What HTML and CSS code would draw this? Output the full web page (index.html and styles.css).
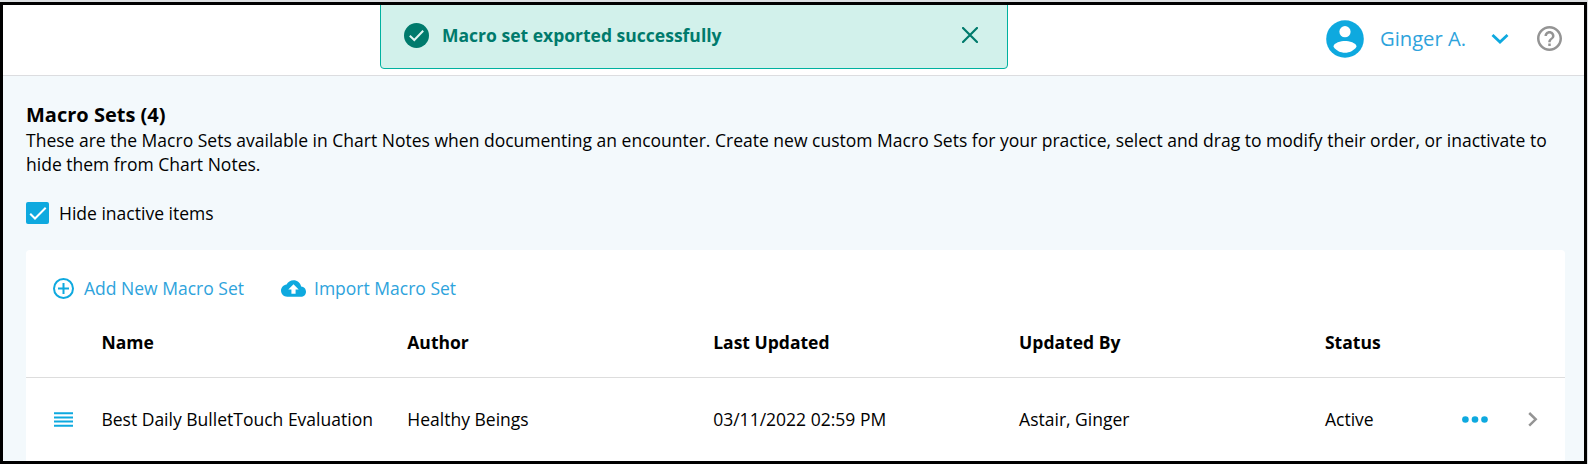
FILE: index.html
```
<!DOCTYPE html>
<html lang="en">
<head>
<meta charset="utf-8">
<title>Macro Sets</title>
<link rel="stylesheet" href="styles.css">
</head>
<body>
<div class="page">
  <header class="topbar">
    <svg class="avatar" viewBox="0 0 38 38"><circle cx="19" cy="19" r="18.8" fill="#0ea9df"/><circle cx="19" cy="11.7" r="5.6" fill="#fff"/><path d="M7.500 26.700C7.500 22.700 15.200 21 19 21s11.500 1.700 11.500 5.700C28 30.600 23.500 32.700 19 32.700S10 30.600 7.500 26.700z" fill="#fff"/></svg>
    <span class="user">Ginger A.</span>
    <svg class="caret" viewBox="0 0 18 12"><path d="M1.500 2 9 9 16.500 2" fill="none" stroke="#0ea9df" stroke-width="2.800"/></svg>
    <svg class="help" viewBox="2 2 20 20"><path fill="#949494" d="M11 18h2v-2h-2v2zm1-16C6.480 2 2 6.480 2 12s4.480 10 10 10 10-4.480 10-10S17.520 2 12 2zm0 18c-4.410 0-8-3.590-8-8s3.590-8 8-8 8 3.590 8 8-3.590 8-8 8zm0-14c-2.210 0-4 1.790-4 4h2c0-1.100.9-2 2-2s2 .9 2 2c0 2-3 1.750-3 5h2c0-2.250 3-2.500 3-5 0-2.210-1.790-4-4-4z"/></svg>
  </header>
  <main class="content">
    <h1 class="title">Macro Sets (4)</h1>
    <p class="intro">These are the Macro Sets available in Chart Notes when documenting an encounter. Create new custom Macro Sets for your practice, select and drag to modify their order, or inactivate to<br>hide them from Chart Notes.</p>
    <div class="filter">
      <svg class="checkbox" viewBox="0 0 23 22"><rect width="23" height="22" rx="2" fill="#0ea9df"/><path d="M4.200 11.800 9 16.500 19.700 5.800" fill="none" stroke="#fff" stroke-width="2"/></svg>
      <span class="filter-label">Hide inactive items</span>
    </div>
    <section class="card">
      <div class="actions">
        <svg class="add-icon" viewBox="0 0 21 21"><g fill="none" stroke="#0ea9df" stroke-width="2"><circle cx="10.500" cy="10.500" r="9.500"/><path d="M10.500 5v11M5 10.500h11"/></g></svg>
        <span class="link add">Add New Macro Set</span>
        <svg class="cloud" viewBox="0 4 24 16"><path fill="#0ea9df" d="M19.350 10.040C18.670 6.590 15.640 4 12 4 9.110 4 6.600 5.640 5.350 8.040 2.340 8.360 0 10.910 0 14c0 3.310 2.690 6 6 6h13c2.760 0 5-2.240 5-5 0-2.640-2.050-4.780-4.650-4.960zM14 13v4h-4v-4H7l5-5 5 5h-3z"/></svg>
        <span class="link import">Import Macro Set</span>
      </div>
      <div class="row head">
        <span></span><span>Name</span><span>Author</span><span>Last Updated</span><span>Updated By</span><span>Status</span>
      </div>
      <div class="row item">
        <svg class="drag" viewBox="0 0 19 15"><path d="M0 1.200h19M0 5.400h19M0 9.500h19M0 13.700h19" stroke="#0ea9df" stroke-width="2"/></svg>
        <span>Best Daily BulletTouch Evaluation</span><span>Healthy Beings</span><span>03/11/2022 02:59 PM</span><span>Astair, Ginger</span><span>Active</span>
        <svg class="more" viewBox="0 0 26 7"><g fill="#0ea9df"><circle cx="3.400" cy="3.500" r="3.300"/><circle cx="13" cy="3.500" r="3.300"/><circle cx="22.500" cy="3.500" r="3.300"/></g></svg>
        <svg class="next" viewBox="0 0 10 15"><path d="M1.200 1 7.700 7.300 1.200 13.700" fill="none" stroke="#949494" stroke-width="2.500"/></svg>
      </div>
    </section>
  </main>
  <div class="alert">
    <svg class="ok" viewBox="0 0 25 25"><circle cx="12.500" cy="12.500" r="12.500" fill="#007a6c"/><path d="M5.800 12.700 10.300 17 19.200 7.800" fill="none" stroke="#e0f5f1" stroke-width="2"/></svg>
    <span class="alert-text">Macro set exported successfully</span>
    <svg class="close" viewBox="0 0 16 16"><path d="M1 1l14 14M15 1 1 15" stroke="#007a6c" stroke-width="2.200" stroke-linecap="round"/></svg>
  </div>
  <div class="frame"></div>
</div>
</body>
</html>
```
FILE: styles.css
```
* { box-sizing: border-box; }
body { margin: 0; font-family: "Open Sans", sans-serif; font-size: 17.52px; color: #000; }
svg { display: block; flex: none; }
.page { position: relative; width: 1588px; height: 464px; overflow: hidden; background: #f3f9fc; white-space: nowrap; }
.frame { position: absolute; top: 2px; left: 0; width: 1587px; height: 462px; border: 3px solid #000; box-shadow: 0 0 0 2px #dcdfe2; }
.topbar { display: flex; align-items: center; height: 76px; padding: 2px 0 0 1326px; background: #fff; border-bottom: 1px solid #dcdde0; }
.avatar { width: 38px; height: 38px; }
.user { width: 86px; margin-left: 16px; padding-bottom: 2px; font-size: 20.2px; color: #2ea3dc; }
.caret { width: 18px; height: 12px; margin-left: 25px; }
.help { width: 25px; height: 25px; margin: 0 0 0 28px; }
.content { padding: 25px 22px 0 26px; }
.title { margin: 0; font-size: 20px; line-height: 28px; font-weight: 700; }
.intro { margin: -1px 0 0; line-height: 24px; }
.filter { display: flex; align-items: center; height: 22px; margin-top: 26px; }
.checkbox { width: 23px; height: 22px; }
.filter-label { margin-left: 10px; }
.card { width: 1539px; height: 220px; margin-top: 26px; background: #fff; border-radius: 4px; }
.actions { display: flex; align-items: center; height: 76px; padding-left: 27px; }
.link { color: #2ea3dc; }
.add-icon { width: 21px; height: 21px; }
.add { width: 160px; margin-left: 10px; }
.cloud { width: 25px; height: 17px; margin-left: 37px; }
.import { margin-left: 8px; }
.row { display: grid; grid-template-columns: 47.4px repeat(4, 305.9px) 137px 66px auto; align-items: center; padding-left: 28px; }
.head { height: 52px; padding-bottom: 19px; border-bottom: 1px solid #ddd; font-weight: 700; }
.item { height: 82px; }
.drag { width: 19px; height: 15px; }
.more { width: 26px; height: 7px; }
.next { width: 10px; height: 15px; }
.alert { position: absolute; top: 1px; left: 380px; width: 628px; height: 68px; display: flex; align-items: center; padding-left: 23px; border: 1px solid #00b19f; border-radius: 4px; background: #d2f1eb; }
.ok { width: 25px; height: 25px; }
.alert-text { width: 280px; margin-left: 13px; font-weight: 700; color: #007a6c; }
.close { width: 16px; height: 16px; margin-left: 240px; }
```
